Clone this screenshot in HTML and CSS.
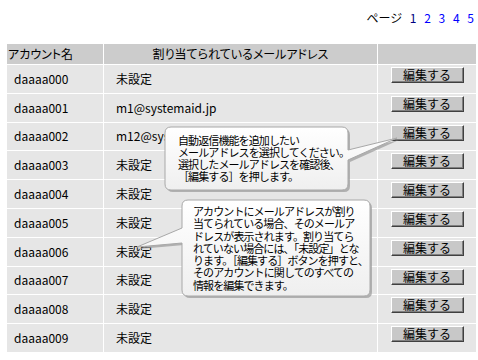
FILE: index.html
```html
<!DOCTYPE html>
<html lang="ja">
<head>
    <meta charset="UTF-8">
    <title>アカウント一覧</title>
    <link rel="stylesheet" href="styles.css">
</head>
<body>
    <div class="page">
        <div class="pager">ページ <span class="cur">1</span> <a href="#">2</a> <a href="#">3</a> <a href="#">4</a> <a href="#">5</a></div>
        <table class="accounts">
            <thead>
                <tr>
                    <th class="c-name">アカウント名</th>
                    <th class="c-mail">割り当てられているメールアドレス</th>
                    <th class="c-edit"></th>
                </tr>
            </thead>
            <tbody>
                <tr><td class="c-name">daaaa000</td><td class="c-mail">未設定</td><td class="c-edit"><button>編集する</button></td></tr>
                <tr><td class="c-name">daaaa001</td><td class="c-mail">m1@systemaid.jp</td><td class="c-edit"><button>編集する</button></td></tr>
                <tr><td class="c-name">daaaa002</td><td class="c-mail">m12@systemaid.jp</td><td class="c-edit"><button>編集する</button></td></tr>
                <tr><td class="c-name">daaaa003</td><td class="c-mail">未設定</td><td class="c-edit"><button>編集する</button></td></tr>
                <tr><td class="c-name">daaaa004</td><td class="c-mail">未設定</td><td class="c-edit"><button>編集する</button></td></tr>
                <tr><td class="c-name">daaaa005</td><td class="c-mail">未設定</td><td class="c-edit"><button>編集する</button></td></tr>
                <tr><td class="c-name">daaaa006</td><td class="c-mail">未設定</td><td class="c-edit"><button>編集する</button></td></tr>
                <tr><td class="c-name">daaaa007</td><td class="c-mail">未設定</td><td class="c-edit"><button>編集する</button></td></tr>
                <tr><td class="c-name">daaaa008</td><td class="c-mail">未設定</td><td class="c-edit"><button>編集する</button></td></tr>
                <tr><td class="c-name">daaaa009</td><td class="c-mail">未設定</td><td class="c-edit"><button>編集する</button></td></tr>
            </tbody>
        </table>

        <!-- callouts -->
        <svg class="callouts" width="478" height="360" viewBox="0 0 478 360">
            <defs>
                <linearGradient id="fill" x1="0" y1="0" x2="0" y2="1">
                    <stop offset="0" stop-color="#ffffff"/>
                    <stop offset="1" stop-color="#efefef"/>
                </linearGradient>
            </defs>
            <g transform="translate(2,2)" fill="#9a9a9a" opacity="0.7">
                <path d="M171,127 H342 Q348,127 348,133 V150 L397,138 L348,160 V184 Q348,190 342,190 H171 Q165,190 165,184 V133 Q165,127 171,127 Z"/>
                <path d="M188,200 H364 Q370,200 370,206 V290 Q370,296 364,296 H188 Q182,296 182,290 V243 L137,247 L182,228 V206 Q182,200 188,200 Z"/>
            </g>
            <g fill="url(#fill)" stroke="#a8a8a8" stroke-width="1">
                <path d="M171,127 H342 Q348,127 348,133 V150 L397,138 L348,160 V184 Q348,190 342,190 H171 Q165,190 165,184 V133 Q165,127 171,127 Z"/>
                <path d="M188,200 H364 Q370,200 370,206 V290 Q370,296 364,296 H188 Q182,296 182,290 V243 L137,247 L182,228 V206 Q182,200 188,200 Z"/>
            </g>
        </svg>
        <div class="note note-1">自動返信機能を追加したい<br>メールアドレスを選択してください。<br>選択したメールアドレスを確認後、<br>［編集する］を押します。</div>
        <div class="note note-2">アカウントにメールアドレスが割り<br>当てられている場合、そのメールア<br>ドレスが表示されます。割り当てら<br>れていない場合には、「未設定」とな<br>ります。［編集する］ボタンを押すと、<br>そのアカウントに関してのすべての<br>情報を編集できます。</div>
    </div>
</body>
</html>
```

FILE: styles.css
```css
body { margin: 0; background: #fff; font-family: "Noto Sans CJK JP", sans-serif; font-size: 12px; color: #000; }
.page { position: relative; width: 478px; height: 360px; overflow: hidden; }

.pager { text-align: right; padding: 10px 4px 0 0; height: 23px; line-height: 16px; word-spacing: 5px; }
.pager .cur { color: #000080; }
.pager a { color: #0000ff; text-decoration: none; }

.accounts { margin: 10px 0 0 6px; width: 470px; border-spacing: 1px; table-layout: fixed; }
.accounts th { background: #cccccc; font-weight: normal; height: 20px; padding: 0; line-height: 16px; font-feature-settings: "palt"; }
.accounts tbody tr { height: 27.8px; }
.accounts td { background: #e6e6e6; padding: 0; line-height: 16px; }
.c-name { width: 95px; }
.c-mail { width: 273px; }
.c-edit { width: 98px; }
th.c-name { text-align: left; padding-left: 1px; }
th.c-mail { text-align: center; }
td.c-name { padding-left: 7px; }
td.c-mail { padding-left: 12px; white-space: nowrap; overflow: hidden; }
td.c-edit { vertical-align: top; padding-top: 2px; }

button { display: block; margin: 0 auto; width: 73px; height: 16px; padding: 0; font: inherit; font-size: 12px; line-height: 12px; background: #c8c8c8; border: 1px solid; border-color: #ffffff #404040 #404040 #ffffff; box-shadow: inset -1px -1px 0 #808080; }

.callouts { position: absolute; left: 0; top: 0; pointer-events: none; }
.note { position: absolute; font-size: 11px; letter-spacing: -0.9px; white-space: nowrap; }
.note-1 { left: 178px; top: 134px; line-height: 12px; }
.note-2 { left: 193px; top: 205px; line-height: 12.3px; }
```
